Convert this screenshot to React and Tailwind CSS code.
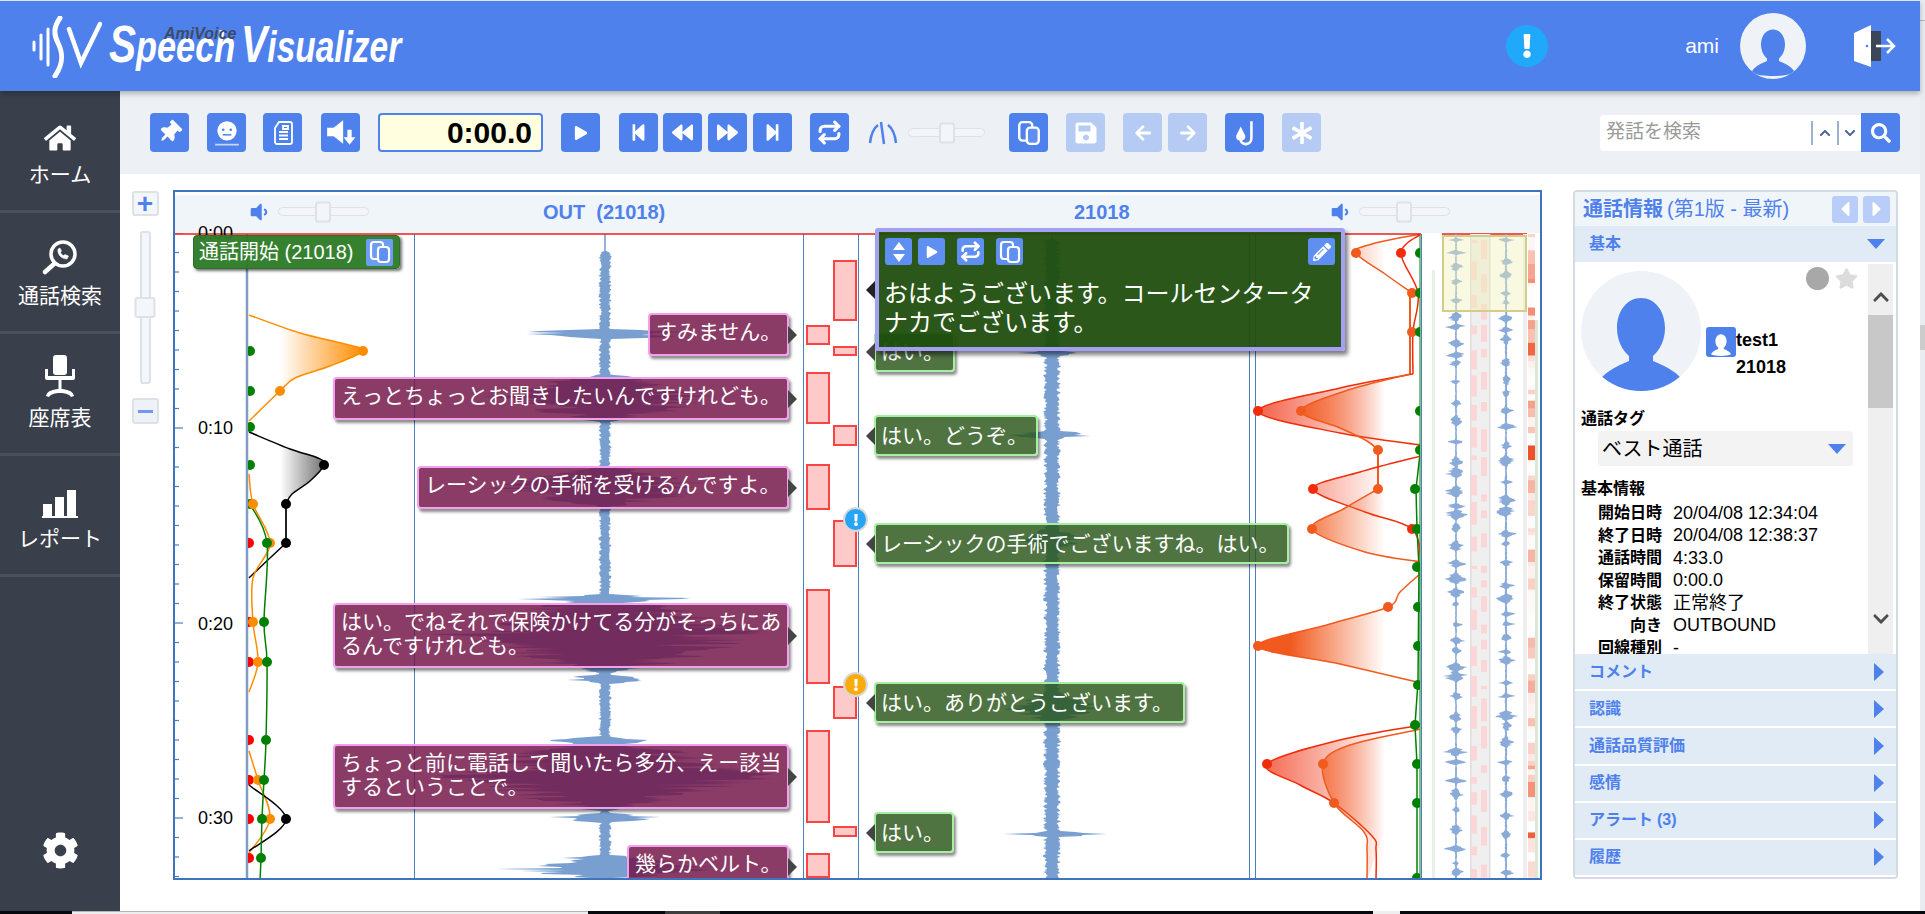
import React from 'react';
import {
  FaHome, FaThumbtack, FaPlay, FaStepBackward, FaBackward, FaForward, FaStepForward,
  FaSave, FaArrowLeft, FaArrowRight, FaAsterisk, FaSearch, FaChevronUp, FaChevronDown,
  FaCog, FaStar, FaPencilAlt, FaVolumeDown, FaExclamation, FaCaretLeft, FaCaretRight,
} from 'react-icons/fa';
import { Repeat } from 'lucide-react';

// seeded random so the waveforms stay the same between runs
const makeRand = (seed) => {
  let s = seed;
  return () => {
    s = (s * 16807) % 2147483647;
    return (s - 1) / 2147483646;
  };
};

const wavePath = (cx, spikes, seed, base, bodyStart) => {
  const rnd = makeRand(seed);
  const left = [];
  const right = [];
  for (let y = 234; y <= 880; y += 1) {
    let wl = y < bodyStart ? 0.8 : base * (0.6 + 0.6 * rnd());
    let wr = y < bodyStart ? 0.8 : base * (0.6 + 0.6 * rnd());
    spikes.forEach((s) => {
      const d = Math.abs(y - s.y);
      if (d < s.h) {
        const k = Math.pow(1 - d / s.h, 0.7);
        wl = Math.max(wl, s.w * k * (0.3 + 0.7 * rnd()));
        wr = Math.max(wr, s.w * k * (0.3 + 0.7 * rnd()));
      }
    });
    left.push(`${(cx - wl).toFixed(1)} ${y}`);
    right.unshift(`${(cx + wr).toFixed(1)} ${y}`);
  }
  return `M${left.join('L')}L${right.join('L')}Z`;
};

const miniSpikes = (seed) => {
  const rnd = makeRand(seed);
  const list = [];
  let y = 240;
  while (y < 875) {
    list.push({ y, h: 2 + rnd() * 4, w: 6 + rnd() * 9 });
    y += 8 + rnd() * 15;
  }
  return list;
};

const smooth = (pts) => {
  let d = `M${pts[0][0]} ${pts[0][1]}`;
  for (let i = 0; i < pts.length - 1; i += 1) {
    const p0 = pts[i - 1] || pts[i];
    const p1 = pts[i];
    const p2 = pts[i + 1];
    const p3 = pts[i + 2] || p2;
    const c1x = p1[0] + (p2[0] - p0[0]) / 6;
    const c1y = p1[1] + (p2[1] - p0[1]) / 6;
    const c2x = p2[0] - (p3[0] - p1[0]) / 6;
    const c2y = p2[1] - (p3[1] - p1[1]) / 6;
    d += `C${c1x.toFixed(1)} ${c1y.toFixed(1)} ${c2x.toFixed(1)} ${c2y.toFixed(1)} ${p2[0]} ${p2[1]}`;
  }
  return d;
};

const WAVE_LEFT = wavePath(605, [
  { y: 334, h: 5, w: 125 }, { y: 398, h: 24, w: 130 }, { y: 487, h: 20, w: 125 },
  { y: 599, h: 5, w: 115 }, { y: 635, h: 38, w: 190 }, { y: 679, h: 5, w: 55 },
  { y: 741, h: 5, w: 65 }, { y: 775, h: 36, w: 185 }, { y: 818, h: 5, w: 70 }, { y: 867, h: 12, w: 130 },
], 77, 5.5, 252);

const WAVE_RIGHT = wavePath(1052, [
  { y: 353, h: 4, w: 35 }, { y: 435, h: 5, w: 48 }, { y: 540, h: 14, w: 35 },
  { y: 707, h: 16, w: 55 }, { y: 834, h: 3, w: 66 },
], 131, 7.5, 240);

const MINI_A = wavePath(1456, miniSpikes(11), 41, 0.9, 234);
const MINI_B = wavePath(1506, miniSpikes(29), 53, 1.1, 234);

const MINI_BLOCKS = (() => {
  const rnd = makeRand(91);
  const list = [];
  [1475, 1485].forEach((x) => {
    let y = 240;
    while (y < 870) {
      const h = 3 + rnd() * 20;
      list.push({ x: x - 4, y, h });
      y += h + 5 + rnd() * 14;
    }
  });
  return list;
})();

const HEAT = (() => {
  const rnd = makeRand(17);
  const list = [];
  let y = 234;
  while (y < 878) {
    const h = 3 + rnd() * 13;
    list.push({ y, h, o: rnd() * rnd() * 1.2 });
    y += h;
  }
  return list;
})();

const leftBubbles = [
  { x: 648, y: 313, w: 141, h: 43, lines: ['すみません。'] },
  { x: 333, y: 377, w: 456, h: 43, lines: ['えっとちょっとお聞きしたいんですけれども。'] },
  { x: 417, y: 466, w: 372, h: 43, lines: ['レーシックの手術を受けるんですよ。'] },
  { x: 333, y: 603, w: 456, h: 65, lines: ['はい。でねそれで保険かけてる分がそっちにあ', 'るんですけれども。'] },
  { x: 333, y: 744, w: 456, h: 65, lines: ['ちょっと前に電話して聞いたら多分、えー該当', 'するということで。'] },
  { x: 627, y: 845, w: 162, h: 43, lines: ['幾らかベルト。'] },
];

const rightBubbles = [
  { x: 874, y: 332, w: 81, h: 40, text: 'はい。' },
  { x: 874, y: 415, w: 164, h: 41, text: 'はい。どうぞ。' },
  { x: 874, y: 523, w: 415, h: 41, text: 'レーシックの手術でございますね。はい。' },
  { x: 874, y: 682, w: 311, h: 41, text: 'はい。ありがとうございます。' },
  { x: 874, y: 812, w: 80, h: 41, text: 'はい。' },
];

const redBoxes = [
  [806, 325, 345], [806, 372, 424], [806, 464, 510], [806, 589, 684], [806, 730, 823], [806, 853, 878],
  [833, 260, 321], [833, 346, 356], [833, 425, 446], [833, 520, 567], [833, 686, 719], [833, 826, 837],
];

const timeLabels = [['0:00', 233], ['0:10', 428], ['0:20', 624], ['0:30', 818]];

const infoRows = [
  ['開始日時', '20/04/08 12:34:04'],
  ['終了日時', '20/04/08 12:38:37'],
  ['通話時間', '4:33.0'],
  ['保留時間', '0:00.0'],
  ['終了状態', '正常終了'],
  ['向き', 'OUTBOUND'],
  ['回線種別', '-'],
];

const CopyIcon = ({ size = 22 }) => (
  <svg width={size} height={size} viewBox="0 0 24 24" fill="none" stroke="currentColor" strokeWidth="2.2">
    <rect x="3" y="2" width="12" height="17" rx="3" />
    <rect x="10" y="7" width="11" height="15" rx="3" fill="#5f8ff0" />
  </svg>
);

const Person = ({ className }) => (
  <svg className={className} viewBox="0 0 120 120" fill="currentColor">
    <path d="M60 27c-14 0-24 13-24 30 0 12 5 22 12 28v5c-14 6-27 12-31 23 10 5 26 7 43 7s33-2 43-7c-4-11-17-17-31-23v-5c7-6 12-16 12-28 0-17-10-30-24-30z" />
  </svg>
);

const SideItem = ({ icon, label }) => (
  <div className="flex h-[121.5px] flex-col items-center justify-end border-b-[3px] border-[#4b505a] pb-[22px] text-white">
    <div className="mb-[8px] flex h-[48px] items-end">{icon}</div>
    <span className="text-[21px] leading-[26px]">{label}</span>
  </div>
);

const Btn = ({ children, className = '', off }) => (
  <div className={`flex h-[39px] w-[39px] items-center justify-center rounded-[4px] text-white ${off ? 'bg-[#b6cbf3]' : 'bg-[#4f81ec]'} ${className}`}>
    {children}
  </div>
);

const MiniBtn = ({ children, className = '' }) => (
  <div className={`flex h-[27px] w-[27px] items-center justify-center rounded-[3px] bg-[#5f8ff0] text-white ${className}`}>
    {children}
  </div>
);

const Slider = ({ w, thumb, h = 'h-[9px]' }) => (
  <div className={`relative rounded-full border border-[#dde2e8] bg-[#f3f5f8] ${h}`} style={{ width: w }}>
    <div className="absolute top-1/2 h-[21px] w-[16px] -translate-x-1/2 -translate-y-1/2 rounded-[3px] border-2 border-[#dde2e8] bg-[#f3f5f8]" style={{ left: thumb }} />
  </div>
);

const Alert = ({ top, color }) => (
  <div
    className={`absolute z-20 flex h-[25px] w-[25px] items-center justify-center rounded-full border-2 border-[#d8d8d8] text-white ${color}`}
    style={{ left: 668, top: top - 233 }}
  >
    <FaExclamation size={12} />
  </div>
);

const Accordion = ({ label, extra }) => (
  <div className="flex h-[37.4px] items-center justify-between border-b-2 border-white bg-[#e1ebf5] pl-[14px] pr-[12px] text-[16px] font-bold text-[#4f81ec]">
    <span>
      {label}
      {extra && <span className="ml-[4px]">{extra}</span>}
    </span>
    <svg width="10" height="18" viewBox="0 0 10 18" fill="#4f81ec"><path d="M0 0l10 9-10 9z" /></svg>
  </div>
);

const Logo = () => (
  <div className="flex h-full items-start">
    <svg className="ml-[32px] mt-[15px] h-[62px] w-[70px]" viewBox="0 0 70 62" fill="none" stroke="white" strokeLinecap="round">
      <path d="M2 26v8" strokeWidth="3" />
      <path d="M9 19v24" strokeWidth="3" />
      <path d="M16 13v36" strokeWidth="3" />
      <path d="M28 2c-7 10-6 17-2 25 5 10 6 20-3 33" strokeWidth="5" />
      <path d="M37 13l12 34 19-39" strokeWidth="4.5" />
    </svg>
    <div className="relative ml-[7px] mt-[18px] flex items-baseline whitespace-nowrap font-bold italic text-white [font-family:'Liberation_Sans',sans-serif]">
      <div className="w-[132px] origin-left scale-x-[0.78] text-[44px] leading-[50px]">
        <span className="text-[52px]">S</span>peech
      </div>
      <div className="w-[170px] origin-left scale-x-[0.76] text-[44px] leading-[50px]">
        <span className="text-[52px]">V</span>isualizer
      </div>
      <span className="absolute left-[55px] top-[7px] text-[16px] leading-[15px] text-[#3d4a66]">AmiVoice</span>
    </div>
  </div>
);

const Chart = () => (
  <svg className="absolute left-0 top-0 h-[645px] w-[1365px]" viewBox="175 233 1365 645">
    <defs>
      <clipPath id="emo"><rect x="248" y="233" width="1172" height="645" /></clipPath>
      <linearGradient id="og" gradientUnits="userSpaceOnUse" x1="280" x2="363" y1="0" y2="0">
        <stop offset="0" stopColor="#ff8c00" stopOpacity="0" />
        <stop offset="1" stopColor="#ff8c00" />
      </linearGradient>
      <linearGradient id="bk" gradientUnits="userSpaceOnUse" x1="280" x2="324" y1="0" y2="0">
        <stop offset="0" stopColor="#000" stopOpacity="0" />
        <stop offset="1" stopColor="#000" stopOpacity="0.55" />
      </linearGradient>
      <linearGradient id="rg" gradientUnits="userSpaceOnUse" x1="1258" x2="1385" y1="0" y2="0">
        <stop offset="0" stopColor="#f02c0a" stopOpacity="0.75" />
        <stop offset="1" stopColor="#f02c0a" stopOpacity="0" />
      </linearGradient>
      <linearGradient id="og2" gradientUnits="userSpaceOnUse" x1="1290" x2="1385" y1="0" y2="0">
        <stop offset="0" stopColor="#f15a1e" />
        <stop offset="1" stopColor="#f15a1e" stopOpacity="0" />
      </linearGradient>
    </defs>

    {/* time ticks */}
    {Array.from({ length: 34 }, (_, i) => (
      <path key={i} d={`M175 ${233 + i * 19.5}h${i % 10 === 0 ? 8 : 4}`} stroke="#4a7fc0" strokeWidth="1.2" />
    ))}

    <path d={WAVE_LEFT} fill="#789fd0" />
    <path d={WAVE_RIGHT} fill="#789fd0" />

    {[414, 803, 858, 1249, 1255].map((x) => (
      <path key={x} d={`M${x}.5 234V878`} stroke="#4a7fc0" strokeWidth="1" />
    ))}
    <path d="M247 234V878" stroke="#7e9cc4" strokeWidth="2.5" />
    <path d="M1421.5 234V878" stroke="#4a7fc0" strokeWidth="1" />
    <path d="M1420 234V878" stroke="#008000" strokeWidth="1" />

    <g clipPath="url(#emo)">
      {/* left emotion curves */}
      <path d={smooth([[249, 315], [300, 333], [345, 344], [363, 351], [330, 366], [295, 378], [280, 391], [249, 421]])} fill="url(#og)" stroke="#ff8c00" strokeWidth="1.5" />
      <path d={smooth([[249, 432], [290, 449], [318, 458], [324, 465], [310, 481], [292, 494], [286, 504]])} fill="url(#bk)" stroke="#000" strokeWidth="1.5" />
      <path d="M286 504V543" stroke="#222" strokeWidth="2" />
      <path d={smooth([[286, 543], [270, 558], [249, 578]])} fill="none" stroke="#000" strokeWidth="1.5" />
      <path d={smooth([[249, 474], [253, 504], [270, 543], [253, 578], [253, 622], [258, 662], [249, 692]])} fill="none" stroke="#ff8c00" strokeWidth="1.5" />
      <path d={smooth([[249, 751], [258, 780], [270, 819], [249, 853]])} fill="none" stroke="#ff8c00" strokeWidth="1.5" />
      <path d={smooth([[249, 785], [286, 819], [249, 851]])} fill="none" stroke="#000" strokeWidth="1.5" />
      <path d={smooth([[250, 504], [267, 543], [264, 622], [267, 662], [266, 740], [264, 780], [262, 819], [261, 858], [260, 880]])} fill="none" stroke="#008000" strokeWidth="1.5" />
      {[351, 391, 427, 465, 504].map((y) => <circle key={y} cx="250" cy={y} r="5" fill="#008000" />)}
      {[543, 622, 662, 740, 780, 819, 858].map((y) => <circle key={y} cx="249" cy={y} r="5" fill="#f00" />)}
      {[[253, 504], [270, 543], [253, 622], [258, 662], [258, 780], [270, 819], [280, 391], [363, 351]].map(([x, y]) => (
        <circle key={`${x}-${y}`} cx={x} cy={y} r="5" fill="#ff8c00" />
      ))}
      {[[324, 465], [286, 504], [286, 543], [286, 819]].map(([x, y]) => <circle key={`${x}-${y}`} cx={x} cy={y} r="5" fill="#000" />)}
      {[[267, 543], [264, 622], [267, 662], [266, 740], [264, 780], [262, 819], [261, 858]].map(([x, y]) => (
        <circle key={`${x}-${y}`} cx={x} cy={y} r="5" fill="#008000" />
      ))}

      {/* right emotion curves */}
      <path d={smooth([[1421, 234], [1372, 244], [1356, 253], [1385, 274], [1412, 293]])} fill="url(#og2)" stroke="#f15a1e" strokeWidth="1.5" />
      <path d={smooth([[1421, 234], [1401, 253], [1418, 293], [1413, 332], [1413, 374]])} fill="none" stroke="#f02c0a" strokeWidth="1.5" />
      <path d="M1410 293V374" stroke="#f15a1e" strokeWidth="2" />
      <path d={smooth([[1413, 374], [1340, 388], [1258, 411], [1340, 433], [1421, 445]])} fill="url(#rg)" stroke="#f02c0a" strokeWidth="1.5" />
      <path d={smooth([[1410, 374], [1345, 391], [1301, 411], [1340, 428], [1367, 441], [1378, 450]])} fill="url(#og2)" stroke="#f15a1e" strokeWidth="1.5" />
      <path d="M1378 450V489" stroke="#f15a1e" strokeWidth="2" />
      <path d={smooth([[1421, 456], [1360, 472], [1313, 489], [1365, 512], [1412, 529], [1421, 562]])} fill="url(#rg)" stroke="#f02c0a" strokeWidth="1.5" />
      <path d={smooth([[1378, 489], [1345, 508], [1312, 529], [1365, 552], [1421, 562]])} fill="url(#og2)" stroke="#f15a1e" strokeWidth="1.5" />
      <path d={smooth([[1421, 573], [1400, 592], [1388, 607], [1330, 624], [1258, 646], [1340, 664], [1417, 682]])} fill="url(#og2)" stroke="#f15a1e" strokeWidth="1.5" />
      <path d={smooth([[1421, 725], [1340, 740], [1267, 764], [1300, 785], [1334, 803], [1372, 836], [1376, 850], [1376, 880]])} fill="url(#rg)" stroke="#f02c0a" strokeWidth="1.5" />
      <path d={smooth([[1421, 729], [1350, 745], [1323, 764], [1334, 803], [1364, 832], [1367, 850], [1367, 880]])} fill="url(#og2)" stroke="#f15a1e" strokeWidth="1.5" />
      {[[1356, 253], [1412, 293], [1412, 332], [1301, 411], [1378, 450], [1378, 489], [1312, 529], [1388, 607], [1258, 646], [1323, 764], [1334, 803]].map(([x, y]) => (
        <circle key={`${x}-${y}`} cx={x} cy={y} r="5" fill="#f15a1e" />
      ))}
      {[[1401, 253], [1258, 411], [1313, 489], [1412, 529], [1267, 764]].map(([x, y]) => (
        <circle key={`${x}-${y}`} cx={x} cy={y} r="5" fill="#f02c0a" />
      ))}
      <path d="M1421 445L1416 489L1417 529L1419 567L1418 682L1415 725L1417 764V880" fill="none" stroke="#008000" strokeWidth="1.5" />
      {[[1420, 253], [1420, 293], [1420, 332], [1420, 411], [1420, 450], [1415, 489], [1417, 529], [1417, 567], [1418, 607], [1418, 646], [1418, 685], [1415, 725], [1417, 764], [1417, 803], [1417, 878]].map(([x, y]) => (
        <circle key={`${x}-${y}`} cx={x} cy={y} r="5" fill="#008000" />
      ))}
    </g>
    <path d="M175 234H1421M1442 234H1527" stroke="#e8221a" strokeWidth="1.5" />

    {/* overview strip */}
    <rect x="1432" y="270" width="3" height="608" fill="#e8f0e8" />
    <rect x="1470" y="234" width="20" height="644" fill="#efefef" />
    <rect x="1470" y="234" width="1.5" height="644" fill="#dedede" />
    <rect x="1489" y="234" width="1.5" height="644" fill="#dedede" />
    <rect x="1523" y="234" width="4" height="644" fill="#eeeeee" />
    {MINI_BLOCKS.map((b) => <rect key={`${b.x}-${b.y}`} x={b.x} y={b.y} width="6" height={b.h} fill="#fcd6d6" />)}
    <path d={MINI_A} fill="#8aaad8" />
    <path d={MINI_B} fill="#8aaad8" />
    {HEAT.map((b) => <rect key={b.y} x="1528" y={b.y} width="7" height={b.h} fill="#f0502a" fillOpacity={b.o} />)}
    <rect x="1535" y="320" width="3" height="558" fill="#d9e9d9" />
  </svg>
);

export default function App() {
  return (
    <div className="h-[914px] w-[1925px] overflow-hidden bg-white text-black [font-family:'Liberation_Sans','Noto_Sans_CJK_JP',sans-serif]">
      <div className="flex h-[911px]">
        <div className="flex w-[1920px] flex-col">
          {/* header */}
          <div className="relative z-10 flex h-[91px] items-stretch border-t border-[#dfe6f5] bg-[#4f81ec] shadow-[0_3px_5px_rgba(0,0,0,0.25)]">
            <Logo />
            <div className="ml-auto flex items-center">
              <div className="flex h-[42px] w-[42px] items-center justify-center rounded-full bg-[#20a8fb] text-white"><FaExclamation size={24} /></div>
              <span className="ml-[137px] text-[21px] text-white">ami</span>
              <div className="ml-[21px] flex h-[66px] w-[66px] items-center justify-center overflow-hidden rounded-full bg-[#eff3f8] text-[#4f81ec]">
                <Person className="h-[60px] w-[60px]" />
              </div>
              <svg className="ml-[48px] mr-[24px] h-[42px] w-[42px]" viewBox="0 0 42 42">
                <rect x="17" y="6" width="10" height="30" fill="#3d4656" />
                <path d="M0 8L17 0V42L0 36Z" fill="white" />
                <circle cx="13" cy="21" r="1.3" fill="#4f81ec" />
                <path d="M22 21H40M33 14l7 7-7 7" fill="none" stroke="white" strokeWidth="2.5" />
              </svg>
            </div>
          </div>

          <div className="flex min-h-0 flex-1">
            {/* sidebar */}
            <div className="flex w-[120px] flex-col bg-[#3a404b]">
              <SideItem label="ホーム" icon={<FaHome size={32} />} />
              <SideItem
                label="通話検索"
                icon={
                  <svg width="36" height="36" viewBox="0 0 36 36" fill="none" stroke="white">
                    <circle cx="21" cy="15" r="12" strokeWidth="3.5" />
                    <path d="M12 25L3 33" strokeWidth="4.5" strokeLinecap="round" />
                    <path d="M16 10c-1 5 3 10 9 10l1.5-3-3.5-1.5-1.5 1c-1.500-.5-2.500-2-3-3l1-1.500-1.500-3z" fill="white" strokeWidth="0.5" />
                  </svg>
                }
              />
              <SideItem
                label="座席表"
                icon={
                  <svg width="34" height="42" viewBox="0 0 34 42" fill="white">
                    <rect x="10" y="0" width="14" height="20" rx="3" />
                    <path d="M2 14h3v7h24v-7h3v9a2 2 0 0 1-2 2H4a2 2 0 0 1-2-2z" />
                    <rect x="15.500" y="25" width="3" height="10" />
                    <path d="M3 41c1-5 7-7 14-7s13 2 14 7l-3 1c-2-3-6-4-11-4s-9 1-11 4z" />
                  </svg>
                }
              />
              <SideItem
                label="レポート"
                icon={
                  <svg width="36" height="30" viewBox="0 0 36 30" fill="white">
                    <rect x="1" y="16" width="9" height="12" />
                    <rect x="13" y="9" width="9" height="19" />
                    <rect x="25" y="2" width="9" height="26" />
                    <rect x="0" y="28" width="36" height="2" />
                  </svg>
                }
              />
              <div className="mt-auto mb-[42px] flex justify-center text-white"><FaCog size={37} /></div>
            </div>

            <div className="flex min-w-0 flex-1 flex-col">
              {/* toolbar */}
              <div className="flex h-[83px] shrink-0 items-center bg-[#edf0f4] pl-[30px]">
                <Btn><FaThumbtack size={23} className="rotate-45" /></Btn>
                <Btn className="ml-[18px]">
                  <svg width="28" height="28" viewBox="0 0 26 26" fill="white">
                    <circle cx="13" cy="11" r="9" />
                    <circle cx="9.500" cy="10" r="1.200" fill="#4f81ec" />
                    <circle cx="16.500" cy="10" r="1.200" fill="#4f81ec" />
                    <rect x="9" y="14" width="8" height="1.400" fill="#4f81ec" />
                    <rect x="2" y="23" width="22" height="1.600" fill="#c8d8f8" />
                  </svg>
                </Btn>
                <Btn className="ml-[17px]">
                  <svg width="24" height="26" viewBox="0 0 24 26" fill="none" stroke="white" strokeWidth="1.800">
                    <path d="M8 2h11a2 2 0 0 1 2 2v18a2 2 0 0 1-2 2H6a2 2 0 0 1-2-2V8z" />
                    <path d="M8 12h9M8 15.500h9M8 19h9M12 6h5v3h-5z" />
                  </svg>
                </Btn>
                <Btn className="ml-[19px]">
                  <svg width="32" height="30" viewBox="0 0 30 28" fill="white">
                    <path d="M2 9h6l9-7v22l-9-7H2z" />
                    <path d="M21 11h4v7h3.500l-5.500 7-5.500-7H21z" />
                  </svg>
                </Btn>
                <div className="ml-[18px] flex h-[39px] w-[165px] items-center justify-end rounded-[4px] border-2 border-[#4f81ec] bg-[#ffffe0] pr-[9px] text-[30px] font-bold leading-none">0:00.0</div>
                <Btn className="ml-[18px]"><FaPlay size={14} /></Btn>
                <Btn className="ml-[19px]"><FaStepBackward size={19} /></Btn>
                <Btn className="ml-[5px]"><FaBackward size={21} /></Btn>
                <Btn className="ml-[6px]"><FaForward size={21} /></Btn>
                <Btn className="ml-[6px]"><FaStepForward size={19} /></Btn>
                <Btn className="ml-[18px]"><Repeat size={25} strokeWidth={3} /></Btn>
                <svg className="ml-[19px] h-[26px] w-[30px]" viewBox="0 0 30 26" fill="none" stroke="#4f81ec" strokeWidth="2.500">
                  <path d="M2 23C3 14 6 8 10 5" />
                  <path d="M20 5c4 3 7 9 8 18" />
                  <path d="M13 2L16 24" strokeWidth="2.500" />
                </svg>
                <div className="ml-[10px]"><Slider w={77} thumb={38} /></div>
                <Btn className="ml-[24px]"><CopyIcon size={26} /></Btn>
                <Btn off className="ml-[18px]"><FaSave size={24} /></Btn>
                <Btn off className="ml-[18px]"><FaArrowLeft size={18} /></Btn>
                <Btn off className="ml-[6px]"><FaArrowRight size={18} /></Btn>
                <Btn className="ml-[18px]">
                  <svg width="26" height="30" viewBox="0 0 24 28" fill="none" stroke="white">
                    <path d="M18 3v16c0 7-10 7-10 1" strokeWidth="2.400" />
                    <path d="M8 8l-4 8c-1 3 1 5 4 5s5-2 4-5z" fill="white" strokeWidth="0" />
                  </svg>
                </Btn>
                <Btn off className="ml-[18px]"><FaAsterisk size={22} /></Btn>
                <div className="ml-[279px] flex h-[36px] w-[261px] items-center rounded-l-[4px] bg-white pl-[6px]">
                  <span className="w-[205px] text-[19px] text-[#9a9a9a]">発話を検索</span>
                  <div className="flex h-[24px] w-[26px] items-center justify-center border-l-2 border-[#9db0cc] text-[#44618f]"><FaChevronUp size={12} /></div>
                  <div className="flex h-[24px] w-[24px] items-center justify-center border-l-2 border-[#9db0cc] text-[#44618f]"><FaChevronDown size={12} /></div>
                </div>
                <div className="flex h-[39px] w-[39px] items-center justify-center rounded-r-[4px] bg-[#4f81ec] text-white"><FaSearch size={20} /></div>
              </div>

              {/* content */}
              <div className="flex min-h-0 flex-1 pt-[16px]">
                {/* vertical zoom */}
                <div className="flex w-[53px] shrink-0 flex-col items-center pr-[3px] pt-[1px]">
                  <div className="flex h-[25px] w-[27px] items-center justify-center rounded-[3px] border-2 border-[#dde2e8] bg-[#f3f6fa] text-[28px] font-bold leading-none text-[#4f81ec]">+</div>
                  <div className="relative mt-[15px] h-[153px] w-[11px] rounded-[3px] border-2 border-[#dde2e8] bg-[#f3f6fa]">
                    <div className="absolute left-1/2 top-[64px] h-[21px] w-[21px] -translate-x-1/2 rounded-[3px] border-2 border-[#dde2e8] bg-[#f3f6fa]" />
                  </div>
                  <div className="mt-[14px] flex h-[26px] w-[27px] items-center justify-center rounded-[3px] border-2 border-[#dde2e8] bg-[#eef2f8]">
                    <div className="h-[3px] w-[15px] bg-[#6f98ee]" />
                  </div>
                </div>

                {/* chart */}
                <div className="flex h-[690px] w-[1369px] shrink-0 flex-col overflow-hidden border-2 border-[#3f73bb]">
                  <div className="flex h-[41px] shrink-0 items-center border-t-[3px] border-white bg-[#f0f5fa] pb-[5px] text-[20px] font-bold text-[#4f81ec]">
                    <FaVolumeDown size={22} className="ml-[73px]" />
                    <div className="ml-[8px]"><Slider w={91} thumb={44} /></div>
                    <span className="ml-[174px] w-[120px] whitespace-pre">OUT  (21018)</span>
                    <span className="ml-[411px] w-[56px]">21018</span>
                    <FaVolumeDown size={22} className="ml-[199px]" />
                    <div className="ml-[8px]"><Slider w={91} thumb={44} /></div>
                  </div>
                  <div className="relative min-h-0 flex-1">
                    <Chart />
                    {timeLabels.map(([t, y]) => (
                      <span key={t} className="absolute left-[23px] text-[18px] leading-[20px]" style={{ top: y - 233 - 10 }}>{t}</span>
                    ))}
                    <div className="absolute left-[18px] top-[2px] flex h-[34px] w-[207px] items-center justify-between rounded-[4px] border border-[#2f6e2c] bg-[#2b7a25]/95 pl-[5px] pr-[6px] text-[20px] whitespace-nowrap text-white shadow-[2px_2px_3px_rgba(0,0,0,0.55)]">
                      <span>通話開始 (21018)</span>
                      <div className="flex h-[27px] w-[27px] items-center justify-center rounded-[2px] bg-[#6e9cf5]"><CopyIcon size={24} /></div>
                    </div>

                    {redBoxes.map(([x, a, b]) => (
                      <div
                        key={`${x}-${a}`}
                        className="absolute w-[24px] border-2 border-[#f94444] bg-[#fdc9c9]"
                        style={{ left: x - 175, top: a - 233, height: b - a }}
                      />
                    ))}

                    {leftBubbles.map((b) => (
                      <div
                        key={b.y}
                        className="absolute z-10 rounded-[4px] border-2 border-[#f2a0ee] bg-[rgba(114,21,71,0.83)] px-[6px] py-[5px] text-[21px] leading-[24px] whitespace-nowrap text-white shadow-[2px_3px_3px_rgba(0,0,0,0.45)]"
                        style={{ left: b.x - 175, top: b.y - 233, width: b.w, height: b.h }}
                      >
                        {b.lines.map((l) => <div key={l}>{l}</div>)}
                        <div className="absolute left-full top-1/2 ml-[1px] h-0 w-0 -translate-y-1/2 border-y-[9px] border-l-[9px] border-y-transparent border-l-[#444]" />
                      </div>
                    ))}

                    {rightBubbles.map((b) => (
                      <div
                        key={b.y}
                        className="absolute z-10 flex items-center rounded-[4px] border-2 border-[#a4f0a0] bg-[rgba(40,85,25,0.82)] px-[5px] text-[21px] whitespace-nowrap text-white shadow-[2px_3px_3px_rgba(0,0,0,0.45)]"
                        style={{ left: b.x - 175, top: b.y - 233, width: b.w, height: b.h }}
                      >
                        {b.text}
                        <div className="absolute right-full top-1/2 mr-[1px] h-0 w-0 -translate-y-1/2 border-y-[9px] border-r-[9px] border-y-transparent border-r-[#444]" />
                      </div>
                    ))}

                    {/* selected utterance */}
                    <div className="absolute left-[700px] top-[-5px] z-20 h-[123px] w-[470px] rounded-[3px] border-[4px] border-[#a4a0f4] bg-[rgba(30,78,12,0.94)] pl-[6px] pr-[6px] pt-[6px] text-white shadow-[3px_4px_4px_rgba(0,0,0,0.5)]">
                      <div className="flex">
                        <MiniBtn><svg width="14" height="20" viewBox="0 0 14 20" fill="white"><path d="M7 0l6 8H1zM7 20l-6-8h12z" /></svg></MiniBtn>
                        <MiniBtn className="ml-[6px]"><FaPlay size={12} /></MiniBtn>
                        <MiniBtn className="ml-[12px]"><Repeat size={21} strokeWidth={3} /></MiniBtn>
                        <MiniBtn className="ml-[12px]"><CopyIcon size={24} /></MiniBtn>
                        <MiniBtn className="ml-auto"><FaPencilAlt size={18} /></MiniBtn>
                      </div>
                      <div className="ml-[-1px] mt-[14px] text-[24px] leading-[29px]">
                        おはようございます。コールセンタータ<br />ナカでございます。
                      </div>
                      <div className="absolute right-full top-1/2 mr-[4px] h-0 w-0 -translate-y-1/2 border-y-[9px] border-r-[9px] border-y-transparent border-r-[#222]" />
                    </div>

                    <Alert top={507} color="bg-[#28a4f5]" />
                    <Alert top={672} color="bg-[#fbac0d]" />

                    <div className="absolute left-[1267px] top-[2px] z-[5] h-[77px] w-[85px] border-2 border-[#d2ce8a] bg-[rgba(240,240,180,0.4)]" />
                  </div>
                </div>

                {/* call info panel */}
                <div className="ml-[31px] flex h-[689px] w-[325px] shrink-0 flex-col overflow-hidden rounded-[4px] border-2 border-[#d5dbe3]">
                  <div className="flex h-[34px] shrink-0 items-center bg-[#f0f5fa] pl-[8px] pr-[6px] text-[20px] text-[#4f81ec]">
                    <span className="font-bold">通話情報</span>
                    <span className="ml-[4px]">(第1版 - 最新)</span>
                    <div className="ml-auto flex h-[27px] w-[26px] items-center justify-center rounded-[3px] bg-[#b8cdf7] text-white"><FaCaretLeft size={24} /></div>
                    <div className="ml-[5px] flex h-[27px] w-[27px] items-center justify-center rounded-[3px] bg-[#b8cdf7] text-white"><FaCaretRight size={24} /></div>
                  </div>
                  <div className="flex h-[36px] shrink-0 items-center justify-between bg-[#e1ebf5] pl-[14px] pr-[11px] text-[16px] font-bold text-[#4f81ec]">
                    基本
                    <svg width="18" height="10" viewBox="0 0 18 10" fill="#4f81ec"><path d="M0 0h18L9 10z" /></svg>
                  </div>

                  <div className="relative flex h-[392px] shrink-0 overflow-hidden">
                    <div className="min-w-0 flex-1 pl-[6px] pt-[9px]">
                      <div className="flex">
                        <div className="flex h-[120px] w-[120px] items-end justify-center overflow-hidden rounded-full bg-[#eff3f8] text-[#4f81ec]">
                          <Person className="h-[120px] w-[120px]" />
                        </div>
                        <div className="ml-[5px] mt-[56px] flex">
                          <div className="flex h-[30px] w-[30px] items-center justify-center rounded-[3px] bg-[#4f81ec] text-white"><Person className="h-[28px] w-[28px]" /></div>
                          <div className="text-[18px] font-bold leading-[27px]">
                            <div>test1</div>
                            <div>21018</div>
                          </div>
                        </div>
                      </div>
                      <div className="mt-[16px] h-[24px] text-[16px] font-bold leading-[24px]">通話タグ</div>
                      <div className="ml-[17px] flex h-[35px] w-[255px] items-center justify-between rounded-[4px] bg-[#f3f3f3] pl-[4px] pr-[7px] text-[20px]">
                        ベスト通話
                        <svg width="18" height="10" viewBox="0 0 18 10" fill="#4f81ec"><path d="M0 0h18L9 10z" /></svg>
                      </div>
                      <div className="mt-[11px] h-[24px] text-[16px] font-bold leading-[24px]">基本情報</div>
                      <div className="mt-[1px] text-[16px]">
                        {infoRows.map(([k, v]) => (
                          <div key={k} className="flex h-[22.5px] items-center overflow-hidden">
                            <span className="w-[81px] text-right font-bold">{k}</span>
                            <span className="ml-[11px] text-[18px]">{v}</span>
                          </div>
                        ))}
                      </div>
                    </div>
                    <div className="mr-[3px] mt-[2px] flex w-[25px] shrink-0 flex-col items-center bg-[#efefef] text-[#4d4d4d]">
                      <FaChevronUp size={18} className="mt-[24px]" />
                      <div className="mt-[9px] h-[93px] w-full bg-[#c8c8c8]" />
                      <FaChevronDown size={18} className="mt-[202px]" />
                    </div>
                    <div className="absolute left-[231px] top-[5px] h-[23px] w-[23px] rounded-full bg-[#a8a8a8]" />
                    <FaStar size={23} className="absolute left-[260px] top-[5px] text-[#dcdcdc]" />
                  </div>

                  <Accordion label="コメント" />
                  <Accordion label="認識" />
                  <Accordion label="通話品質評価" />
                  <Accordion label="感情" />
                  <Accordion label="アラート" extra="(3)" />
                  <Accordion label="履歴" />
                </div>
              </div>
            </div>
          </div>
        </div>

        {/* page scrollbar */}
        <div className="flex w-[5px] flex-col bg-[#e9ecf0]">
          <div className="mt-[20px] h-px bg-[#b5b5b5]" />
          <div className="mt-[304px] h-[25px] bg-[#cccccc]" />
        </div>
      </div>

      {/* strip of the window below */}
      <div className="flex h-[3px]">
        <div className="w-[72px] bg-[#05090d]" />
        <div className="w-[516px] border-t border-[#b5b5b5] bg-[#eeeeee]" />
        <div className="w-[77px] bg-[#05090d]" />
        <div className="w-[55px] bg-[#3d3d3d]" />
        <div className="w-[653px] bg-[#05090d]" />
        <div className="w-[27px] bg-[#eeeeee]" />
        <div className="flex-1 bg-[#05090d]" />
      </div>
    </div>
  );
}
